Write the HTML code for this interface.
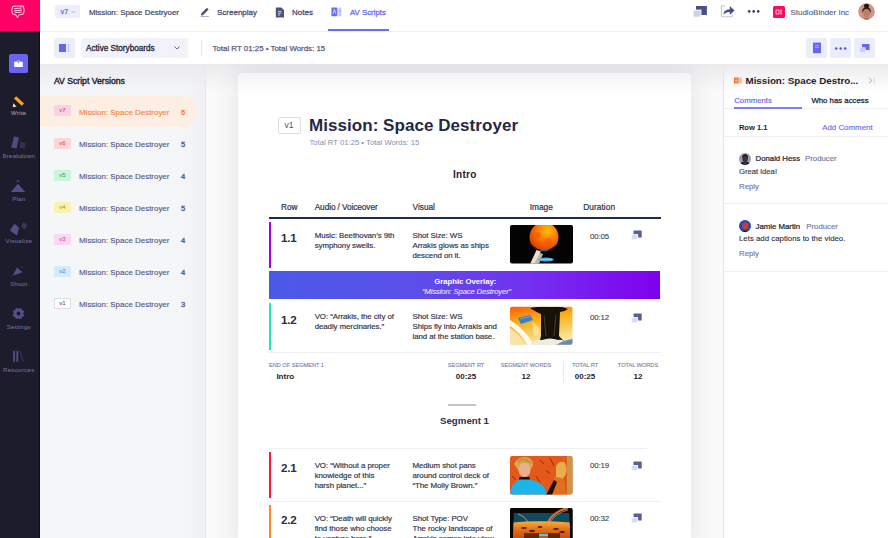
<!DOCTYPE html>
<html><head><meta charset="utf-8">
<style>
*{box-sizing:border-box;margin:0;padding:0}
html,body{width:888px;height:538px;overflow:hidden;background:#fff;font-family:"Liberation Sans",sans-serif;color:#2b2e45}
.a{position:absolute;white-space:nowrap;line-height:1}
.b{font-weight:700}
.sb{-webkit-text-stroke:0.3px currentColor}
#side{position:absolute;left:0;top:0;width:40px;height:538px;background:#1d1c2c}
#sideline{position:absolute;left:38.6px;top:31px;width:1.2px;height:507px;background:#0e0d18}
#pink{position:absolute;left:0;top:0;width:40px;height:31px;background:#ff0064}
.lbl{position:absolute;left:0;width:37.6px;text-align:center;font-size:6px;letter-spacing:0.3px;line-height:1;color:#67648a;white-space:nowrap;-webkit-text-stroke:0.15px currentColor}
#top{position:absolute;left:40px;top:0;width:848px;height:32px;background:#fff;border-bottom:1px solid #f1f1f3}
#bar2{position:absolute;left:40px;top:32px;width:848px;height:32px;background:#fff}
#left{position:absolute;left:40px;top:64px;width:165px;height:474px;background:linear-gradient(90deg,#f5f6f8 85%,#f0f1f3)}
#main{position:absolute;left:205px;top:64px;width:518px;height:474px;background:#fafafa;border-left:1px solid #e4e5e8}
#card{position:absolute;left:33px;top:9px;width:453px;height:480px;background:#fff;border-radius:5px;box-shadow:0 0 24px 2px rgba(40,50,60,0.10)}
#right{position:absolute;left:723px;top:64px;width:165px;height:474px;background:#fff;border-left:1px solid #e3e3e8}
#shadow{position:absolute;left:40px;top:64px;width:848px;height:28px;background:linear-gradient(#ebebed,rgba(240,240,242,0))}
.badge{position:absolute;left:54px;width:17px;height:11px;font-size:6px;line-height:11px;text-align:center;-webkit-text-stroke:0.08px currentColor}
.vrow{position:absolute;left:79px;font-size:7.95px;line-height:1;color:#4d527c;white-space:nowrap;-webkit-text-stroke:0.1px currentColor}
.vnum{position:absolute;left:180px;font-size:7.6px;line-height:1;color:#50557f;-webkit-text-stroke:0.3px currentColor}
.th{position:absolute;top:202.7px;font-size:8.3px;font-weight:400;-webkit-text-stroke:0.2px #2f3247;color:#2f3247;line-height:1;white-space:nowrap}
.rowbar{position:absolute;left:269px;width:2px}
.rnum{position:absolute;left:281px;font-size:11.6px;font-weight:700;color:#2b2f45;line-height:1;letter-spacing:-0.2px}
.txt{position:absolute;font-size:7.9px;line-height:10px;color:#33364a;white-space:nowrap;letter-spacing:-0.08px;-webkit-text-stroke:0.18px currentColor}
.dur{position:absolute;left:590px;font-size:7.9px;line-height:1;color:#3a3c4c;letter-spacing:-0.15px;-webkit-text-stroke:0.1px currentColor}
.sep{position:absolute;left:269px;width:392px;height:1px;background:#eeeef2}
.slab{position:absolute;font-size:5.6px;line-height:1;color:#7a7fac;white-space:nowrap;text-align:center;-webkit-text-stroke:0.12px currentColor}
.sval{position:absolute;font-size:8px;font-weight:700;line-height:1;color:#1f2233;white-space:nowrap;text-align:center}
.cbtn{position:absolute;top:38px;width:21px;height:20px;background:#ecedfc;border-radius:2px}
</style></head><body>

<!-- SIDEBAR -->
<div id="side"></div>
<div id="sideline"></div>
<div id="pink"></div>
<svg class="a" style="left:10px;top:5px" width="16" height="14" viewBox="0 0 16 14">
 <path d="M2.6 1.4 Q8 0.6 13.4 1.2 Q14.8 4.8 13.6 8.8 Q10.5 9.8 9.2 9.8 L7.4 12.6 L6.4 10 Q4 9.8 2.4 8.8 Q1.2 5 2.6 1.4Z" fill="none" stroke="#fff" stroke-width="0.9"/>
 <path d="M4.2 3.8 Q8 3.2 11.6 3 M4 5.8 Q8 5.6 12 5 M4.6 7.6 Q8 7.6 11.6 7" fill="none" stroke="#fff" stroke-width="0.8"/>
</svg>
<div class="a" style="left:9px;top:54px;width:19px;height:19px;background:#6a64f3;border-radius:2px"></div>
<svg class="a" style="left:13px;top:58px" width="11" height="11" viewBox="0 0 11 11">
 <path d="M3.6 4 L5.5 2 L7.4 4" fill="none" stroke="#d8d6fb" stroke-width="0.7"/>
 <rect x="1.2" y="3.8" width="8.6" height="5.2" rx="0.5" fill="#fff"/>
 <circle cx="5.5" cy="4.6" r="0.7" fill="#6a64f3"/>
</svg>
<!-- write -->
<svg class="a" style="left:12px;top:95px" width="13" height="13" viewBox="0 0 13 13">
 <path d="M4.2 1.2 L12 8.6 L9.8 10.8 L2 3.4Z" fill="#f5a623"/>
 <path d="M1.2 8.2 L4.6 11.6 L0.8 12.2Z" fill="#f1e6c0"/>
</svg>
<div class="lbl" style="top:110.3px;color:#908daf">Write</div>
<svg class="a" style="left:10px;top:136px" width="17" height="14" viewBox="0 0 17 14">
 <path d="M4 0.5 L9 1.6 L6.6 12.6 L1.2 11.4Z" fill="#4f4a82"/>
 <path d="M10 6 L15.5 6.6 L15 12.6 L9.6 12Z" fill="#34304f"/>
</svg>
<div class="lbl" style="top:153px">Breakdown</div>
<svg class="a" style="left:10px;top:178px" width="16" height="15" viewBox="0 0 16 15">
 <path d="M5.8 4 L8 1 L10.2 4Z" fill="#3e3a66"/>
 <path d="M0.8 14 L8 5.8 L15.2 14Z" fill="#544e8a"/>
</svg>
<div class="lbl" style="top:195.6px">Plan</div>
<svg class="a" style="left:9px;top:221px" width="20" height="16" viewBox="0 0 20 16">
 <path d="M5.5 2.6 L10 6.8 L8 14.4 L0.8 9.4Z" fill="#544e8a"/>
 <path d="M14.5 1 L18.5 4.6 L15.4 8.6 L12 5Z" fill="#3a365c"/>
</svg>
<div class="lbl" style="top:237.6px">Visualize</div>
<svg class="a" style="left:12px;top:266px" width="12" height="11" viewBox="0 0 12 11">
 <path d="M5 1.5 L10.4 6.2 L0.8 9.8Z" fill="#544e8a"/>
 <circle cx="10.2" cy="1.5" r="0.7" fill="#544e8a"/>
</svg>
<div class="lbl" style="top:281.3px">Shoot</div>
<svg class="a" style="left:12px;top:307px" width="13" height="13" viewBox="0 0 13 13">
 <circle cx="6.5" cy="6.5" r="4.6" fill="#544e8a"/><circle cx="10.47" cy="8.15" r="1.6" fill="#544e8a"/><circle cx="8.15" cy="10.47" r="1.6" fill="#544e8a"/><circle cx="4.85" cy="10.47" r="1.6" fill="#544e8a"/><circle cx="2.53" cy="8.15" r="1.6" fill="#544e8a"/><circle cx="2.53" cy="4.85" r="1.6" fill="#544e8a"/><circle cx="4.85" cy="2.53" r="1.6" fill="#544e8a"/><circle cx="8.15" cy="2.53" r="1.6" fill="#544e8a"/><circle cx="10.47" cy="4.85" r="1.6" fill="#544e8a"/>
 <circle cx="6.5" cy="6.5" r="1.9" fill="#1d1c2c"/>
</svg>
<div class="lbl" style="top:324px">Settings</div>
<svg class="a" style="left:12px;top:350px" width="13" height="13" viewBox="0 0 13 13">
 <rect x="1.2" y="0.8" width="1.8" height="11" fill="#544e8a"/>
 <rect x="4.4" y="0.8" width="1.8" height="11" fill="#544e8a"/>
 <path d="M7.2 0.8 L8.4 0.8 L12 11.8 L10.8 11.8Z" fill="#3a365c"/>
</svg>
<div class="lbl" style="top:367.3px">Resources</div>

<!-- TOP BAR -->
<div id="top"></div>
<div class="a" style="left:55px;top:5px;width:25px;height:13px;background:#eceefc;border-radius:2px"></div>
<div class="a" style="left:60.5px;top:8px;font-size:7.4px;color:#6a6ef0;-webkit-text-stroke:0.25px currentColor">v7</div>
<svg class="a" style="left:71px;top:10px" width="5" height="4" viewBox="0 0 5 4"><path d="M0.6 0.8 L2.5 2.8 L4.4 0.8" fill="none" stroke="#9a9ef2" stroke-width="0.8"/></svg>
<div class="a" style="left:89px;top:9px;font-size:7.9px;color:#45485e;-webkit-text-stroke:0.22px currentColor">Mission: Space Destryoer</div>
<svg class="a" style="left:200px;top:6px" width="10" height="11" viewBox="0 0 10 11">
 <path d="M1.2 7.4 L6.8 1.8 L8.6 3.6 L3 9.2 L1 9.4Z" fill="#4f5379"/>
 <rect x="0.6" y="10" width="8.2" height="0.8" fill="#9a9cb6"/>
</svg>
<div class="a" style="left:217px;top:8.8px;font-size:8px;color:#4f5379;-webkit-text-stroke:0.3px currentColor">Screenplay</div>
<svg class="a" style="left:275px;top:6.5px" width="10" height="11" viewBox="0 0 10 11">
 <path d="M0.8 0.4 L6.4 0.4 L9 3 L9 10.4 L0.8 10.4Z" fill="#4f5379"/>
 <path d="M3 4.4 L6.4 4.4 M3 6.2 L6.4 6.2 M3 8 L5 8" stroke="#fff" stroke-width="0.7"/>
</svg>
<div class="a" style="left:292px;top:8.8px;font-size:8px;color:#4f5379;-webkit-text-stroke:0.3px currentColor">Notes</div>
<svg class="a" style="left:331px;top:7px" width="11" height="10" viewBox="0 0 11 10">
 <rect x="0.4" y="0.6" width="6" height="8.6" rx="0.6" fill="#6a6ef0"/>
 <path d="M2 6.6 L3.4 2.6 L4.8 6.6" fill="none" stroke="#fff" stroke-width="0.7"/>
 <rect x="7.4" y="0.6" width="3" height="8.6" fill="#c6c8f8"/>
 <path d="M8.2 3.6 L8.9 4.6 L9.6 3.6" fill="none" stroke="#6a6ef0" stroke-width="0.6"/>
</svg>
<div class="a" style="left:350px;top:8.8px;font-size:7.8px;color:#6a6ef0;-webkit-text-stroke:0.3px currentColor">AV Scripts</div>
<div class="a" style="left:328px;top:29.4px;width:61px;height:1.8px;background:#6a6ef0"></div>
<svg class="a" style="left:692px;top:4px" width="17" height="14" viewBox="0 0 17 14">
 <path d="M4 2 L14.9 2 L14.9 11.6 L13.6 10.6 L13.6 11 L4 11Z" fill="#4a4f86"/>
 <rect x="0.8" y="5.6" width="8.6" height="8" fill="#fff"/>
 <rect x="1.6" y="6.4" width="7" height="6.3" rx="0.6" fill="#cfd1e4"/>
</svg>
<svg class="a" style="left:720px;top:4px" width="16" height="14" viewBox="0 0 16 14">
 <path d="M5 1.9 L2.4 1.9 Q1.4 1.9 1.4 2.9 L1.4 11.8 Q1.4 12.7 2.4 12.7 L11.4 12.7 Q12.4 12.7 12.4 11.8 L12.4 10.2" fill="none" stroke="#c5c7d8" stroke-width="1.1"/>
 <path d="M3.4 10.4 Q3.6 5.6 9.8 5.2 L9.8 2 L14.6 6.5 L9.8 11 L9.8 7.9 Q5.6 7.7 3.4 10.4Z" fill="#4a4f86"/>
</svg>
<svg class="a" style="left:747px;top:9px" width="14" height="5" viewBox="0 0 14 5"><circle cx="2.2" cy="2.4" r="1.3" fill="#3a3e6a"/><circle cx="6.7" cy="2.4" r="1.3" fill="#3a3e6a"/><circle cx="11.2" cy="2.4" r="1.3" fill="#3a3e6a"/></svg>
<div class="a" style="left:773px;top:5.5px;width:12px;height:12px;background:#ff0a63;border-radius:1.5px"></div>
<svg class="a" style="left:775px;top:7.5px" width="8" height="8" viewBox="0 0 8 8"><path d="M1 2 L4 2 L4 6 L1 6Z M5 2.2 L7 2.2 M5 4 L7 4 M5 5.8 L7 5.8" fill="none" stroke="#fff" stroke-width="0.7"/></svg>
<div class="a" style="left:790.4px;top:9px;font-size:8px;color:#555970;-webkit-text-stroke:0.1px currentColor">StudioBinder Inc</div>
<svg class="a" style="left:858px;top:3px" width="17" height="17" viewBox="0 0 17 17">
 <defs><clipPath id="av"><circle cx="8.5" cy="8.5" r="8.3"/></clipPath></defs>
 <circle cx="8.5" cy="8.5" r="8.3" fill="#d49284"/>
 <g clip-path="url(#av)">
  <ellipse cx="8.5" cy="3" rx="2.6" ry="2.2" fill="#1c1412"/>
  <path d="M4.2 10 Q3.8 4.4 8.5 4.2 Q13.2 4.4 12.8 10 L11.6 8 Q8.5 5.6 5.4 8Z" fill="#1c1412"/>
  <ellipse cx="8.5" cy="10" rx="3.3" ry="4.2" fill="#b97e66"/>
  <path d="M5 16 Q8.5 14 12 16 L12 17 L5 17Z" fill="#9a6a56"/>
 </g>
</svg>

<!-- BAR 2 -->
<div id="bar2"></div>
<div class="a" style="left:54px;top:38px;width:21px;height:19.5px;background:#eceefc;border-radius:2px"></div>
<div class="a" style="left:59px;top:44.4px;width:7.2px;height:7.2px;background:#6466f1"></div>
<div class="a" style="left:68.2px;top:44.4px;width:1.3px;height:7.2px;background:#b9bbf6"></div>
<div class="a" style="left:80.5px;top:38px;width:107px;height:19.5px;background:#f2f3fa;border-radius:2px"></div>
<div class="a" style="left:86px;top:45.3px;font-size:8.2px;color:#232539;-webkit-text-stroke:0.3px #232539">Active Storyboards</div>
<svg class="a" style="left:174px;top:46px" width="6" height="4" viewBox="0 0 6 4"><path d="M0.5 0.6 L3 3 L5.5 0.6" fill="none" stroke="#55587a" stroke-width="0.9"/></svg>
<div class="a" style="left:201px;top:40px;width:1px;height:16px;background:#e6e6ee"></div>
<div class="a" style="left:212.5px;top:45px;font-size:7.9px;color:#585c7e;-webkit-text-stroke:0.25px currentColor">Total RT 01:25 • Total Words: 15</div>
<div class="cbtn" style="left:806px"></div>
<div class="cbtn" style="left:830px"></div>
<div class="cbtn" style="left:854px"></div>
<svg class="a" style="left:812px;top:42px" width="10" height="12" viewBox="0 0 10 12">
 <rect x="1" y="0.6" width="8" height="10.6" fill="#6466f1"/>
 <path d="M3 3.6 L7 3.6 M3 5.6 L7 5.6" stroke="#dcdcfb" stroke-width="0.6"/>
</svg>
<svg class="a" style="left:834px;top:45.5px" width="14" height="5" viewBox="0 0 14 5"><circle cx="2.2" cy="2.5" r="1.3" fill="#5558e8"/><circle cx="6.7" cy="2.5" r="1.3" fill="#5558e8"/><circle cx="11.2" cy="2.5" r="1.3" fill="#5558e8"/></svg>
<svg class="a" style="left:858px;top:42px" width="14" height="12" viewBox="0 0 14 12">
 <path d="M4 2 L11.5 2 L11.5 8.7 L10.6 8 L4 8Z" fill="#6466f1"/>
 <rect x="1.3" y="5.3" width="6.4" height="5.3" fill="#eceefc"/>
 <rect x="2" y="6" width="5" height="4" fill="#c9cbf8"/>
</svg>

<!-- LEFT PANEL -->
<div id="left"></div>
<div id="main"></div>
<div id="right"></div>
<div id="shadow"></div>
<div class="a sb" style="left:54px;top:76.8px;font-size:8.65px;color:#1f2233;-webkit-text-stroke:0.4px #1f2233">AV Script Versions</div>
<div class="a" style="left:40px;top:96px;width:157px;height:31px;background:#fdeee3;border-radius:0 16px 16px 0"></div>
<div class="badge" style="top:105px;background:#fbd2e4;color:#e6407e">v7</div>
<div class="vrow" style="top:109.3px;color:#f28231">Mission: Space Destroyer</div>
<div class="vnum" style="top:108.6px;color:#f28231;left:181px">6</div>
<div class="badge" style="top:137.5px;background:#fdd6d8;color:#ec4a5c">v6</div>
<div class="vrow" style="top:141.3px">Mission: Space Destroyer</div>
<div class="vnum" style="top:140.6px;left:181px">5</div>
<div class="badge" style="top:169.5px;background:#c8f5dc;color:#2fa866">v5</div>
<div class="vrow" style="top:173.3px">Mission: Space Destroyer</div>
<div class="vnum" style="top:172.6px;left:181px">4</div>
<div class="badge" style="top:201.5px;background:#fcf1b3;color:#b09a30">v4</div>
<div class="vrow" style="top:205.3px">Mission: Space Destroyer</div>
<div class="vnum" style="top:204.6px;left:181px">5</div>
<div class="badge" style="top:233.5px;background:#fcd7f2;color:#e040a0">v3</div>
<div class="vrow" style="top:237.3px">Mission: Space Destroyer</div>
<div class="vnum" style="top:236.6px;left:181px">4</div>
<div class="badge" style="top:265.5px;background:#d3ecfc;color:#3a90dc">v2</div>
<div class="vrow" style="top:269.3px">Mission: Space Destroyer</div>
<div class="vnum" style="top:268.6px;left:181px">4</div>
<div class="badge" style="top:297.5px;background:#fff;border:0.8px solid #dcdde5;color:#55586e;line-height:9.4px">v1</div>
<div class="vrow" style="top:301.3px">Mission: Space Destroyer</div>
<div class="vnum" style="top:300.6px;left:181px">3</div>

<!-- CARD -->
<div style="position:absolute;left:205px;top:64px;width:518px;height:474px;overflow:hidden"><div id="card"></div></div>
<div class="a" style="left:238px;top:73px;width:453px;height:22px;background:linear-gradient(#f4f4f6,rgba(255,255,255,0));border-radius:5px 5px 0 0"></div>

<div class="a" style="left:278px;top:117px;width:23px;height:16.5px;border:1px solid #dcdde6;border-radius:2px;background:#fff"></div>
<div class="a" style="left:284.5px;top:121px;font-size:8.6px;color:#50536e">v1</div>
<div class="a b" style="left:309px;top:116.6px;font-size:17px;color:#1f2a44;letter-spacing:0.05px">Mission: Space Destroyer</div>
<div class="a" style="left:309.5px;top:138.6px;font-size:7.7px;color:#8a8eb2">Total RT 01:25 • Total Words: 15</div>
<div class="a b" style="left:453px;top:170.4px;font-size:10px;color:#1f2233;letter-spacing:0.3px">Intro</div>
<div class="th" style="left:281px">Row</div>
<div class="th" style="left:314.7px;letter-spacing:-0.1px">Audio / Voiceover</div>
<div class="th" style="left:412.5px">Visual</div>
<div class="th" style="left:529.7px">Image</div>
<div class="th" style="left:583.3px;letter-spacing:0.05px">Duration</div>
<div class="a" style="left:269px;top:217.2px;width:391.5px;height:2.2px;background:#1f2a44"></div>

<!-- row 1.1 -->
<div class="rowbar" style="top:222px;height:46px;background:#a000f2"></div>
<div class="rnum" style="top:231.8px">1.1</div>
<div class="txt" style="left:314.7px;top:230.8px">Music: Beethovan’s 9th<br>symphony swells.</div>
<div class="txt" style="left:412.5px;top:230.8px">Shot Size: WS<br>Arrakis glows as ships<br>descend on it.</div>
<svg class="a" style="left:510px;top:225px" width="63" height="39" viewBox="0 0 63 39">
 <defs><clipPath id="c1"><rect width="63" height="38.5" rx="2"/></clipPath>
 <radialGradient id="pl" cx="0.62" cy="0.28" r="0.75"><stop offset="0" stop-color="#ffc400"/><stop offset="0.45" stop-color="#ff7a00"/><stop offset="1" stop-color="#d83800"/></radialGradient></defs>
 <g clip-path="url(#c1)">
 <rect width="63" height="39" fill="#030303"/>
 <path d="M20 39 L27 24 L31 25 L27 39Z" fill="#e8e2cc"/>
 <path d="M24 39 L30 28 L33 29 L29 39Z" fill="#bfb8a4"/>
 <circle cx="34" cy="12" r="14.5" fill="url(#pl)"/>
 <circle cx="28" cy="10" r="3" fill="#e05a10" opacity="0.5"/><circle cx="38" cy="17" r="4" fill="#e85010" opacity="0.45"/>
 <path d="M21 20 Q34 32 47 20" fill="none" stroke="#1a1a1a" stroke-width="1.4"/>
 <path d="M30 25.5 L38 25.5" stroke="#3a7ab0" stroke-width="0.7"/>
 <ellipse cx="36" cy="34.6" rx="8" ry="2" fill="#4aa8dc"/>
 <path d="M30 34.4 L42 34.4" stroke="#b8e4f8" stroke-width="0.6"/>
 </g></svg>
<div class="dur" style="top:232.6px">00:05</div>
<svg class="a" style="left:630px;top:230px" width="13" height="11" viewBox="0 0 13 11">
 <rect x="3.5" y="0.6" width="8.2" height="7" rx="0.5" fill="#5a5e98"/>
 <rect x="0.9" y="4.1" width="7.2" height="6" fill="#fff"/>
 <rect x="1.7" y="4.9" width="5.6" height="4.4" fill="#d9dbef"/>
</svg>
<!-- band -->
<div class="a" style="left:269px;top:271px;width:391px;height:28px;background:linear-gradient(90deg,#4a5ae6,#5b4fea 36%,#7330f0 67%,#7f00ee)"></div>
<div class="a b" style="left:434.3px;top:277.6px;font-size:7.8px;color:#fff;letter-spacing:-0.05px">Graphic Overlay:</div>
<div class="a" style="left:422.2px;top:287.6px;font-size:7.7px;color:#e6e0ff;font-style:italic;letter-spacing:-0.15px;-webkit-text-stroke:0.1px currentColor">“Mission: Space Destroyer”</div>
<!-- row 1.2 -->
<div class="rowbar" style="top:303px;height:47px;background:#1de9b6"></div>
<div class="rnum" style="top:313.8px">1.2</div>
<div class="txt" style="left:314.7px;top:311.9px">VO: “Arrakis, the city of<br>deadly mercinaries.”</div>
<div class="txt" style="left:412.5px;top:311.9px">Shot Size: WS<br>Ships fly into Arrakis and<br>land at the station base.</div>
<svg class="a" style="left:510px;top:306px" width="63" height="39" viewBox="0 0 63 39">
 <defs><clipPath id="c2"><rect x="0" y="0.8" width="62.5" height="38" rx="2"/></clipPath>
 <linearGradient id="sk" x1="0" y1="0" x2="0.3" y2="1"><stop offset="0" stop-color="#ff5a00"/><stop offset="0.45" stop-color="#f7b21c"/><stop offset="1" stop-color="#f9e6a0"/></linearGradient></defs>
 <g clip-path="url(#c2)">
 <rect width="63" height="39" fill="url(#sk)"/>
 <path d="M0 14 Q14 22 24 39 L18 39 Q10 26 0 20Z" fill="#fff" opacity="0.9"/>
 <path d="M0 22 Q10 28 14 39 L0 39Z" fill="#f8e4a8"/>
 <path d="M22 16 Q30 20 30 28 L24 30Z" fill="#f9e8b0" opacity="0.7"/>
 <path d="M20 2 Q30 0 42 1 Q52 0 58 3 Q54 6 50 6 L49 30 Q52 34 56 36 L28 36 Q31 33 31 30 L31 8 Q26 6 20 2Z" fill="#17110c"/>
 <path d="M34 9 L36 30 M46 9 L44 30" stroke="#6b4a2a" stroke-width="0.7"/>
 <path d="M20 39 Q24 33 32 34 Q40 31 48 34 Q54 33 58 39Z" fill="#eeeae4"/>
 <path d="M46 39 Q54 34 63 33 L63 39Z" fill="#6b86b8"/>
 <path d="M8 12 L20 9 L23 14 L11 18Z" fill="#3d7ec8"/>
 <path d="M10 13 L20 10.5" stroke="#8fc0f0" stroke-width="0.6"/>
 </g></svg>
<div class="dur" style="top:313.6px">00:12</div>
<svg class="a" style="left:630px;top:312.6px" width="13" height="11" viewBox="0 0 13 11">
 <rect x="3.5" y="0.6" width="8.2" height="7" rx="0.5" fill="#5a5e98"/>
 <rect x="0.9" y="4.1" width="7.2" height="6" fill="#fff"/>
 <rect x="1.7" y="4.9" width="5.6" height="4.4" fill="#d9dbef"/>
</svg>
<div class="sep" style="top:352px"></div>
<!-- summary -->
<div class="slab" style="left:269px;top:363.4px">END OF SEGMENT 1</div>
<div class="a b" style="left:276.4px;top:372.8px;font-size:8px;color:#1f2233">Intro</div>
<div class="slab" style="left:436px;width:60px;top:363.4px">SEGMENT RT</div>
<div class="sval" style="left:436px;width:60px;top:373px">00:25</div>
<div class="slab" style="left:496px;width:60px;top:363.4px">SEGMENT WORDS</div>
<div class="sval" style="left:496px;width:60px;top:373px">12</div>
<div class="a" style="left:563px;top:361px;width:1px;height:21px;background:#e8e8ee"></div>
<div class="slab" style="left:555px;width:60px;top:363.4px">TOTAL RT</div>
<div class="sval" style="left:555px;width:60px;top:373px">00:25</div>
<div class="slab" style="left:608px;width:60px;top:363.4px">TOTAL WORDS</div>
<div class="sval" style="left:608px;width:60px;top:373px">12</div>
<div class="a" style="left:448.4px;top:404px;width:28px;height:1.8px;background:#c4c5cc"></div>
<div class="a b" style="left:440px;top:416.1px;font-size:9.7px;color:#2b3047">Segment 1</div>
<div class="a" style="left:269px;top:448px;width:378px;height:1px;background:#eeeef2"></div>
<!-- row 2.1 -->
<div class="rowbar" style="top:452px;height:46px;background:#ff173f"></div>
<div class="rnum" style="top:461.6px">2.1</div>
<div class="txt" style="left:314.7px;top:461.3px">VO: “Without a proper<br>knowledge of this<br>harsh planet...”</div>
<div class="txt" style="left:412.5px;top:461.3px">Medium shot pans<br>around control deck of<br>“The Molly Brown.”</div>
<svg class="a" style="left:510px;top:455.5px" width="63" height="39" viewBox="0 0 63 39">
 <defs><clipPath id="c3"><rect width="62.5" height="38.5" rx="2"/></clipPath></defs>
 <g clip-path="url(#c3)">
 <rect width="63" height="39" fill="#e4581a"/>
 <path d="M30 4 L34 8 M40 2 L44 10 M26 20 L30 26 M36 14 L40 18 M2 20 L6 24" stroke="#8a2a08" stroke-width="1"/>
 <rect x="57" y="0" width="6" height="39" fill="#c8984a"/>
 <path d="M4 8 Q8 0 16 1 Q23 2 23 9 L21 13 L8 14Z" fill="#d4a850"/>
 <ellipse cx="14.5" cy="14" rx="6" ry="7.2" fill="#eab08e"/>
 <path d="M8 7 Q14 3 21 8 L21 5 Q14 0 7 4Z" fill="#c89440"/>
 <path d="M9.5 21 L19.5 21 L20 25 L9 25Z" fill="#141010"/>
 <path d="M0 39 Q1 26 10 23.5 L20 23.5 Q34 26 38 39Z" fill="#1db4ec"/>
 <path d="M46 10 Q49 5 54 6 Q58 10 56 18 L52 24 L46 22Z" fill="#e8ae4a"/>
 <path d="M44 22 Q50 20 54 24 L56 39 L42 39Z" fill="#e07020"/>
 <path d="M36 39 L44 24 L47 26 L42 39Z" fill="#201008"/>
 </g></svg>
<div class="dur" style="top:462.4px">00:19</div>
<svg class="a" style="left:630px;top:461.2px" width="13" height="11" viewBox="0 0 13 11">
 <rect x="3.5" y="0.6" width="8.2" height="7" rx="0.5" fill="#5a5e98"/>
 <rect x="0.9" y="4.1" width="7.2" height="6" fill="#fff"/>
 <rect x="1.7" y="4.9" width="5.6" height="4.4" fill="#d9dbef"/>
</svg>
<div class="sep" style="top:500.8px"></div>
<!-- row 2.2 -->
<div class="rowbar" style="top:505px;height:40px;background:#ff8a24"></div>
<div class="rnum" style="top:514.2px">2.2</div>
<div class="txt" style="left:314.7px;top:514.0px">VO: “Death will quickly<br>find those who choose<br>to venture here.”</div>
<div class="txt" style="left:412.5px;top:514.0px">Shot Type: POV<br>The rocky landscape of<br>Arrakis comes into view.</div>
<svg class="a" style="left:510px;top:508px" width="63" height="39" viewBox="0 0 63 39">
 <defs><clipPath id="c4"><rect width="62.5" height="39" rx="2"/></clipPath>
 <linearGradient id="ld" x1="0" y1="0" x2="0" y2="1"><stop offset="0" stop-color="#f4b040"/><stop offset="0.35" stop-color="#e26a14"/><stop offset="1" stop-color="#a83a08"/></linearGradient></defs>
 <g clip-path="url(#c4)">
 <rect width="63" height="39" fill="#0a0604"/>
 <rect x="3" y="5" width="57" height="10" fill="#114a5c"/>
 <path d="M8 6 Q15 8 18 14" fill="none" stroke="#c8a890" stroke-width="0.8"/>
 <path d="M38 14 Q44 3 58 0" fill="none" stroke="#e8702a" stroke-width="2"/>
 <path d="M40 14 Q46 5 58 2" fill="none" stroke="#d8a890" stroke-width="0.7"/>
 <path d="M3 14.5 Q30 12 60 14.5 L60 39 L3 39Z" fill="url(#ld)"/>
 <ellipse cx="14" cy="20" rx="3" ry="1" fill="#5a2008"/><ellipse cx="30" cy="19" rx="2.5" ry="1" fill="#5a2008"/><ellipse cx="46" cy="21" rx="3" ry="1" fill="#5a2008"/><ellipse cx="22" cy="23" rx="3" ry="1" fill="#4a1806"/><ellipse cx="52" cy="24" rx="3" ry="1" fill="#4a1806"/>
 <path d="M0 0 L4 0 L2.5 39 L0 39Z M63 0 L59 0 L61 39 L63 39Z" fill="#0a0604"/>
 <rect x="14" y="25" width="36" height="14" fill="#3a1406" opacity="0.7"/>
 <rect x="29" y="25.6" width="9" height="2.4" fill="#30d8f8"/>
 <rect x="29" y="28" width="9" height="2" fill="#e04a10"/>
 </g></svg>
<div class="dur" style="top:515.2px">00:32</div>
<svg class="a" style="left:630px;top:513.4px" width="13" height="11" viewBox="0 0 13 11">
 <rect x="3.5" y="0.6" width="8.2" height="7" rx="0.5" fill="#5a5e98"/>
 <rect x="0.9" y="4.1" width="7.2" height="6" fill="#fff"/>
 <rect x="1.7" y="4.9" width="5.6" height="4.4" fill="#d9dbef"/>
</svg>


<!-- RIGHT PANEL -->
<svg class="a" style="left:734px;top:76.5px" width="8" height="7" viewBox="0 0 8 7">
 <rect x="0" y="0.5" width="4.6" height="6" rx="0.6" fill="#f26b1d"/>
 <path d="M1.2 2 L3.4 2 M1.2 3.5 L3.4 3.5 M1.2 5 L3.4 5" stroke="#fff" stroke-width="0.6"/>
 <rect x="5.2" y="0.5" width="2.6" height="6" fill="#f9b98a"/>
</svg>
<div class="a b" style="left:745.5px;top:75.7px;font-size:9.8px;color:#1c1d2a;letter-spacing:-0.02px">Mission: Space Destro...</div>
<svg class="a" style="left:868px;top:76.5px" width="8" height="7" viewBox="0 0 8 7">
 <path d="M1 0.8 L3.8 3.5 L1 6.2" fill="none" stroke="#9093b0" stroke-width="0.8"/>
 <rect x="5.8" y="0.6" width="0.8" height="5.8" fill="#c7c9da"/>
</svg>
<div class="a" style="left:734.2px;top:96.7px;font-size:7.8px;color:#6a6ef0;-webkit-text-stroke:0.2px currentColor">Comments</div>
<div class="a" style="left:811.4px;top:96.7px;font-size:7.8px;color:#1f2233;-webkit-text-stroke:0.25px #1f2233">Who has access</div>
<div class="a" style="left:724px;top:108.2px;width:164px;height:1px;background:#ededf2"></div>
<div class="a" style="left:734px;top:107px;width:68px;height:2px;background:#7b7ff2"></div>
<div class="a b" style="left:738.9px;top:124.2px;font-size:7.6px;color:#1f2233">Row 1.1</div>
<div class="a" style="left:822.2px;top:124.2px;font-size:7.9px;color:#6a6ef0;-webkit-text-stroke:0.15px currentColor">Add Comment</div>
<div class="a" style="left:724px;top:136.3px;width:164px;height:1px;background:#ededf2"></div>
<svg class="a" style="left:739px;top:152.5px" width="12" height="12" viewBox="0 0 12 12">
 <defs><clipPath id="a1"><circle cx="6" cy="6" r="6"/></clipPath></defs>
 <g clip-path="url(#a1)"><rect width="12" height="12" fill="#8ea2ba"/>
 <path d="M3.2 5 Q3 1.2 6.2 1.2 Q9.2 1.2 9 5Z" fill="#141010"/>
 <ellipse cx="6.1" cy="6" rx="2.7" ry="3.3" fill="#4a3024"/>
 <path d="M0.5 12 Q1.5 8.6 6 8.8 Q10.5 8.6 11.5 12Z" fill="#1c2028"/>
 <path d="M5 9.4 L6 11 L7 9.4" fill="none" stroke="#d04050" stroke-width="0.6"/></g>
</svg>
<div class="a" style="left:755.5px;top:155.4px;font-size:7.8px;color:#1f2233;-webkit-text-stroke:0.22px #1f2233">Donald Hess</div>
<div class="a" style="left:805px;top:155.4px;font-size:7.8px;color:#7378a8;-webkit-text-stroke:0.15px currentColor">Producer</div>
<div class="a" style="left:739px;top:168.4px;font-size:7.7px;color:#2b2e45;-webkit-text-stroke:0.1px currentColor">Great idea!</div>
<div class="a" style="left:739px;top:182.8px;font-size:7.8px;color:#7378a8;-webkit-text-stroke:0.15px currentColor">Reply</div>
<div class="a" style="left:724px;top:203.4px;width:164px;height:1px;background:#ededf2"></div>
<svg class="a" style="left:739px;top:220px" width="12" height="12" viewBox="0 0 12 12">
 <defs><clipPath id="a2"><circle cx="6" cy="6" r="6"/></clipPath></defs>
 <g clip-path="url(#a2)"><rect width="12" height="12" fill="#2b4aa8"/>
 <ellipse cx="6.4" cy="6" rx="3" ry="3.6" fill="#d43a30"/>
 <path d="M1 12 Q6 9 11 12Z" fill="#101828"/></g>
</svg>
<div class="a" style="left:755.5px;top:222.6px;font-size:7.8px;color:#1f2233;-webkit-text-stroke:0.22px #1f2233">Jamie Martin</div>
<div class="a" style="left:806.3px;top:222.6px;font-size:7.8px;color:#7378a8;-webkit-text-stroke:0.15px currentColor">Producer</div>
<div class="a" style="left:739px;top:235.4px;font-size:7.85px;color:#2b2e45;-webkit-text-stroke:0.1px currentColor">Lets add captions to the video.</div>
<div class="a" style="left:739px;top:249.9px;font-size:7.8px;color:#7378a8;-webkit-text-stroke:0.15px currentColor">Reply</div>
<div class="a" style="left:724px;top:271.2px;width:164px;height:1px;background:#ededf2"></div>

</body></html>
